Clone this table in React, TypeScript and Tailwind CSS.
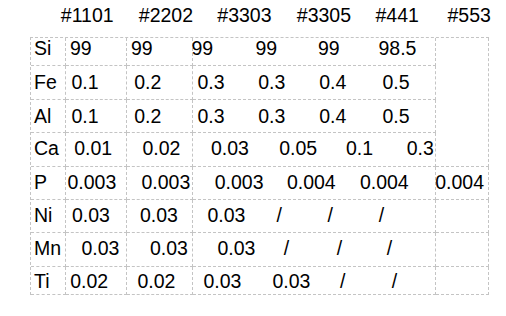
import React from "react";

type Item = [number, string];

const adj = (t: string) => (t.startsWith("/") ? 0 : t.startsWith("#") ? 0.2 : 0.8);

function Vals({ left, items }: { left: number; items: Item[] }) {
  return (
    <div className="flex whitespace-nowrap">
      {items.map(([x, t], i) => {
        const start = x - adj(t);
        const style: React.CSSProperties = {};
        if (i === 0) style.marginLeft = start - left;
        if (i < items.length - 1) {
          const [nx, nt] = items[i + 1];
          style.width = nx - adj(nt) - start;
        }
        return (
          <span key={i} className="shrink-0" style={style}>
            {t}
          </span>
        );
      })}
    </div>
  );
}

type Row = {
  label: string;
  pad: string;
  c2: Item[];
  c3: Item[];
  c4: Item[];
  c5?: Item[];
};

const rows: Row[] = [
  {
    label: "Si",
    pad: "pt-0",
    c2: [[70.7, "99"]],
    c3: [[131.7, "99"]],
    c4: [
      [192.3, "99"],
      [256.3, "99"],
      [318.7, "99"],
      [379.3, "98.5"],
    ],
  },
  {
    label: "Fe",
    pad: "pt-[6px]",
    c2: [[72.3, "0.1"]],
    c3: [[135, "0.2"]],
    c4: [
      [198.3, "0.3"],
      [259, "0.3"],
      [320, "0.4"],
      [383.3, "0.5"],
    ],
  },
  {
    label: "Al",
    pad: "pt-[6px]",
    c2: [[72.3, "0.1"]],
    c3: [[135, "0.2"]],
    c4: [
      [198.3, "0.3"],
      [259, "0.3"],
      [320, "0.4"],
      [383.3, "0.5"],
    ],
  },
  {
    label: "Ca",
    pad: "pt-[5px]",
    c2: [[75, "0.01"]],
    c3: [[143.3, "0.02"]],
    c4: [
      [211.7, "0.03"],
      [280, "0.05"],
      [346.7, "0.1"],
      [407.5, "0.3"],
    ],
  },
  {
    label: "P",
    pad: "pt-[5px]",
    c2: [[68.3, "0.003"]],
    c3: [[142.3, "0.003"]],
    c4: [
      [215.5, "0.003"],
      [287.7, "0.004"],
      [360.7, "0.004"],
    ],
    c5: [[436, "0.004"]],
  },
  {
    label: "Ni",
    pad: "pt-[5px]",
    c2: [[72.7, "0.03"]],
    c3: [[140.7, "0.03"]],
    c4: [
      [208.3, "0.03"],
      [276.5, "/"],
      [327.5, "/"],
      [378.8, "/"],
    ],
    c5: [],
  },
  {
    label: "Mn",
    pad: "pt-[5px]",
    c2: [[82.3, "0.03"]],
    c3: [[150.7, "0.03"]],
    c4: [
      [218.3, "0.03"],
      [283.8, "/"],
      [336.7, "/"],
      [386.7, "/"],
    ],
    c5: [],
  },
  {
    label: "Ti",
    pad: "pt-[4px]",
    c2: [[71, "0.02"]],
    c3: [[138.3, "0.02"]],
    c4: [
      [204.2, "0.03"],
      [273.3, "0.03"],
      [340, "/"],
      [391.7, "/"],
    ],
    c5: [],
  },
];

const header: Item[] = [
  [61, "#1101"],
  [139, "#2202"],
  [217.5, "#3303"],
  [297, "#3305"],
  [375.7, "#441"],
  [447.7, "#553"],
];

const cell = "border-r border-b border-dashed border-[#c4c4c4] overflow-visible";

export default function App() {
  return (
    <div className="w-[506px] h-[316px] bg-white text-black text-[19.5px] leading-[20px] [font-family:'Liberation_Sans',Arial,sans-serif]">
      <div className="h-[37px] pt-[5px]">
        <Vals left={0} items={header} />
      </div>
      <div className="ml-[30px] w-[459px] grid grid-cols-[35px_61px_66px_243px_53px] grid-rows-[28px_34px_33px_34px_33px_33px_34px_28px] border-l border-t border-dashed border-[#c4c4c4]">
        {rows.map((r, i) => (
          <React.Fragment key={r.label}>
            <div className={`${cell} ${r.pad} pl-[3px]`}>{r.label}</div>
            <div className={`${cell} ${r.pad}`}>
              <Vals left={66} items={r.c2} />
            </div>
            <div className={`${cell} ${r.pad}`}>
              <Vals left={127} items={r.c3} />
            </div>
            <div className={`${cell} ${r.pad}`}>
              <Vals left={193} items={r.c4} />
            </div>
            {i === 0 && <div className={`${cell} row-span-4`} />}
            {r.c5 && (
              <div className={`${cell} ${r.pad}`}>
                {r.c5.length > 0 && <Vals left={436} items={r.c5} />}
              </div>
            )}
          </React.Fragment>
        ))}
      </div>
    </div>
  );
}
